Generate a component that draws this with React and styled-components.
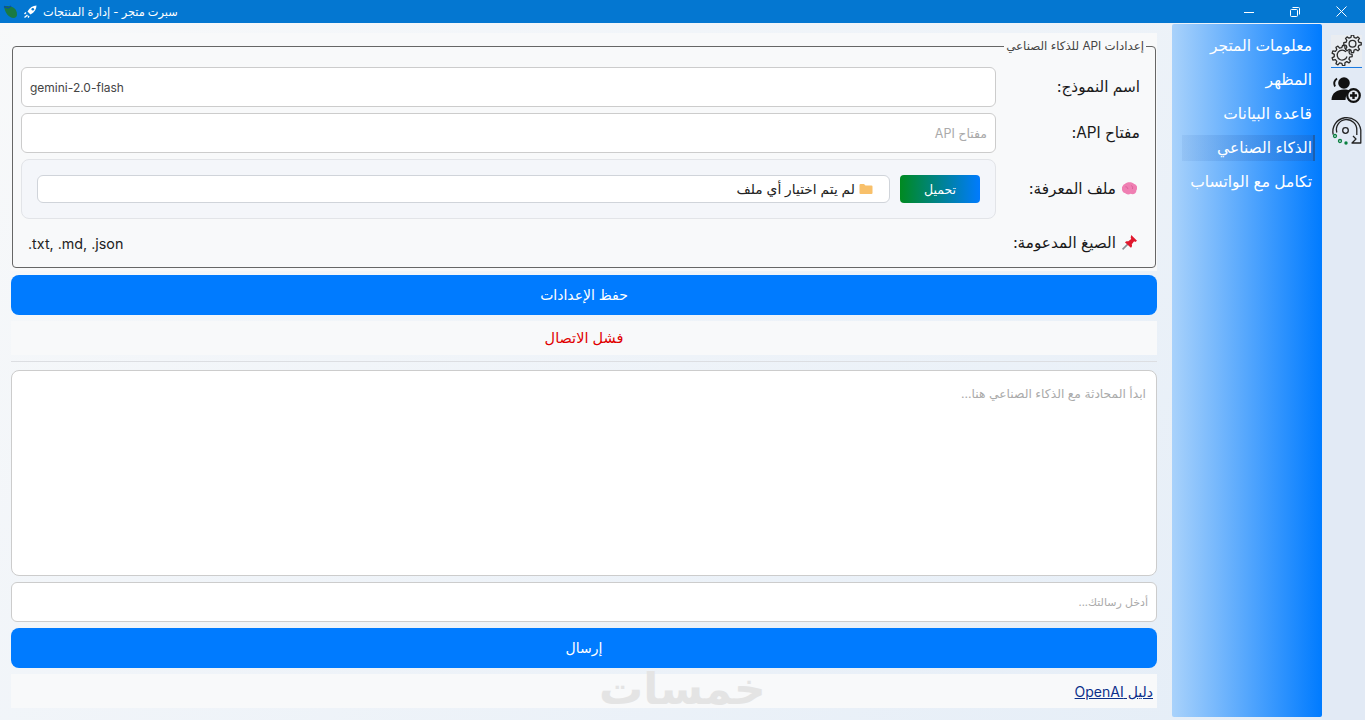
import React from "react";
import styled, { createGlobalStyle } from "styled-components";

const Global = createGlobalStyle`
  html, body, #root { margin: 0; padding: 0; height: 720px; overflow: hidden; }
  * { box-sizing: border-box; }
  body { font-family: "Inter", "DejaVu Sans", sans-serif; color: #1a1a1a; }
`;

const Window = styled.div`
  width: 1365px; height: 720px; display: flex; flex-direction: column;
  background: linear-gradient(135deg, #f8f9fa 0%, #e4edf7 100%);
`;
const TitleBar = styled.div`
  height: 23px; flex: none; background: #0477d1; color: #fff;
  display: flex; align-items: center; justify-content: space-between; padding-right: 1px;
`;
const TitleLeft = styled.div`
  display: flex; align-items: center; gap: 5px; padding-left: 3px; font-size: 11.3px; white-space: nowrap;
`;
const WinControls = styled.div`display: flex; align-items: center; height: 100%;`;
const WinButton = styled.div`
  width: 46px; height: 100%; display: flex; align-items: center; justify-content: center;
`;
const Body = styled.div`flex: 1; display: flex; min-height: 0;`;
const Main = styled.main`
  width: 1172px; flex: none; padding: 10px 15px 0 11px; display: flex; flex-direction: column;
`;
const SettingsPanel = styled.section`
  height: 238px; flex: none; padding: 7px 1px 0; background: #f8f9fa;
`;
const Settings = styled.fieldset`
  margin: 0; padding: 14px 9px 0 8px; height: 228px; border: 1px solid #666; border-radius: 4px;
  background: #f8f9fa; direction: rtl; min-width: 0; display: block;
`;
const Legend = styled.legend`
  padding: 0 2px; font-size: 11.800px; color: #444; line-height: 13px; direction: rtl;
`;
const FormRow = styled.div`
  display: flex; align-items: center; gap: 10px; margin-top: ${p => p.$mt ?? 0}px; padding-right: 6px;
`;
const Label = styled.div`
  width: 134px; flex: none; font-size: 15.300px; color: #1a1a1a; white-space: nowrap; display: flex; align-items: center; gap: 6px;
  padding-bottom: 2px;
`;
const LabelIcon = styled.span`display: flex; margin-right: 3px;`;
const Field = styled.div`
  flex: 1; height: 40px; border: 1px solid #ccc; border-radius: 6px; background: #fff;
  display: flex; align-items: center; padding: 0 8px; font-size: ${p => (p.$ltr ? 12 : 12.5)}px;
  color: ${p => (p.$ph ? "#aaa" : "#444")}; direction: ${p => (p.$ltr ? "ltr" : "rtl")};
`;
const FilePanel = styled.div`
  flex: 1; height: 60px; border: 1px solid #e2e4e8; border-radius: 8px; background: #f4f6fa;
  display: flex; align-items: center; gap: 10px; padding: 0 15px;
`;
const UploadButton = styled.div`
  width: 80px; height: 28px; flex: none; border-radius: 4px; color: #fff; font-size: 12.500px;
  background: linear-gradient(to right, #008a20 0%, #007bff 100%);
  display: flex; align-items: center; justify-content: center;
`;
const FileName = styled.div`
  flex: 1; height: 28px; border: 1px solid #d0d4da; border-radius: 6px; background: #fff;
  display: flex; align-items: center; gap: 4px; padding: 0 16px 0 8px; font-size: 13.800px; color: #222;
`;
const Formats = styled.div`
  flex: 1; direction: ltr; padding-left: 7px; font-size: 14.300px; color: #222;
`;
const PrimaryButton = styled.div`
  height: 40px; flex: none; margin-top: ${p => p.$mt}px; background: #007bff; border-radius: 8px; color: #fff;
  font-size: 14px; display: flex; align-items: center; justify-content: center; padding-bottom: 2px;
`;
const Status = styled.div`
  height: 34px; flex: none; margin-top: 6px; background: #f8f9fa; color: #e00000; font-size: 14.500px;
  display: flex; align-items: center; justify-content: center; padding-bottom: 2px;
`;
const Divider = styled.div`height: 1px; flex: none; margin-top: 6px; background: #dcdee2;`;
const ChatBox = styled.div`
  height: 206px; flex: none; margin-top: 8px; background: #fff; border: 1px solid #ccc; border-radius: 8px;
  padding: 15px 10px; text-align: right; direction: rtl; font-size: 12.300px; color: #aaa;
`;
const MessageInput = styled.div`
  height: 40px; flex: none; margin-top: 6px; background: #fff; border: 1px solid #ccc; border-radius: 6px;
  display: flex; align-items: center; padding: 0 8px; direction: rtl; font-size: 11px; color: #aaa;
`;
const LinkBar = styled.div`
  position: relative; height: 34px; flex: none; margin-top: 6px; background: #f8f9fa;
  display: flex; align-items: center; justify-content: flex-end; padding-right: 4px;
`;
const GuideLink = styled.a`
  font-size: 14px; color: #0b2f8a; text-decoration: underline; direction: rtl;
`;
const Watermark = styled.div`
  position: absolute; left: 588px; top: -10px; font-size: 44px; line-height: 48px; font-weight: 700; color: #e4e4e4;
  direction: rtl; white-space: nowrap;
`;
const Sidebar = styled.nav`
  width: 150px; flex: none; margin: 1px 0 3px; border-radius: 2px; direction: rtl;
  background: linear-gradient(to right, #a9d2fb 0%, #007bff 100%);
  padding: 9px 7px 0 7px; display: flex; flex-direction: column; gap: 8px;
`;
const NavItem = styled.div`
  height: 26px; display: flex; align-items: center; padding: 0 3px 2px 0; color: #fff; font-size: 15.500px; white-space: nowrap;
  ${p => p.$active && `
    background: linear-gradient(to left, rgba(40,90,170,.28), rgba(40,90,170,.08));
    border-right: 2px solid #1c5fae; padding-right: 1px; margin-left: 3px;
  `}
`;
const IconRail = styled.aside`
  flex: 1; background: #e2eaf5; display: flex; flex-direction: column; align-items: flex-start;
  padding: 12px 0 0 9px;
`;
const RailSlot = styled.div`
  width: 31px; height: ${p => p.$h}px; margin-top: ${p => p.$mt ?? 0}px; display: flex; align-items: flex-start;
  border-bottom: ${p => (p.$active ? "1px solid #1a7ae0" : "none")};
`;
const GearSwatch = styled.svg`background: #eaedf1;`;

function gearPath(cx, cy, outer, inner, teeth) {
  const step = (Math.PI * 2) / teeth;
  const pts = [];
  for (let i = 0; i < teeth; i++) {
    const a = i * step;
    [[-0.3, inner], [-0.16, outer], [0.16, outer], [0.3, inner]].forEach(([o, r]) => {
      const t = a + o * step;
      pts.push(`${(cx + r * Math.cos(t)).toFixed(2)} ${(cy + r * Math.sin(t)).toFixed(2)}`);
    });
  }
  return `M${pts.join("L")}Z`;
}

const Gears = () => (
  <GearSwatch width="31" height="31" viewBox="0 0 31 31" fill="none" stroke="#2b2b2b" strokeWidth="1.3" strokeLinejoin="round">
    <path d={gearPath(11, 20.5, 10.2, 7.8, 9)} />
    <path d="M15 16.800A5 5 0 1 0 16 21.500" />
    <path d={gearPath(21.500, 8.800, 8.800, 6.600, 8)} fill="#eaedf1" />
    <circle cx="21.500" cy="8.800" r="3.400" />
  </GearSwatch>
);
const AddUser = () => (
  <svg width="31" height="26" viewBox="0 0 31 26">
    <circle cx="13" cy="6" r="5.800" fill="#111" />
    <path d="M.5 23c0-7 5.500-10.500 12.500-10.500 3 0 5.500 .6 7.500 1.800A9 9 0 0 0 14.500 23z" fill="#111" />
    <path d="M6 1.500a6.500 6.500 0 0 0-2 8" fill="none" stroke="#111" strokeWidth="1.900" />
    <circle cx="22.500" cy="18.500" r="6.300" fill="#dfe5ec" stroke="#111" strokeWidth="2.200" />
    <path d="M22.500 15v7M19 18.500h7" stroke="#111" strokeWidth="2.400" />
  </svg>
);
const Restore = () => (
  <svg width="31" height="31" viewBox="0 0 31 31" fill="none" strokeLinejoin="round">
    <path d="M2.200 19.500A14 14 0 1 1 29.800 15V28H21L25 24 22 21" stroke="#222" strokeWidth="1.300" />
    <path d="M5.800 17.500A10.200 10.200 0 1 1 25.800 15V20" stroke="#222" strokeWidth="1.300" />
    <circle cx="14.500" cy="15.500" r="2.800" stroke="#222" strokeWidth="1.300" />
    <circle cx="4" cy="21" r="1.500" stroke="#0a8040" strokeWidth="1.300" />
    <circle cx="9" cy="26" r="1.500" stroke="#0a8040" strokeWidth="1.300" />
    <circle cx="15" cy="28" r="1.700" fill="#0a8040" />
  </svg>
);
const Leaf = () => (
  <svg width="15" height="14" viewBox="0 0 15 14">
    <path d="M1 1.500c6-1.500 13 1 13 8 0 2-1.500 3.500-3.500 3.500C6 13 2 8 1 1.500z" fill="#1a7a42" />
    <path d="M1 1.500l4 1.500 3-2" stroke="#0b4f9f" strokeWidth="1.400" fill="none" />
  </svg>
);
const Rocket = () => (
  <svg width="15" height="15" viewBox="0 0 15 15" fill="none">
    <path d="M13.500 1.500C10 1.500 6.500 3.500 4.500 7.500l3 3c4-2 6-5.500 6-9z" fill="#fff" />
    <circle cx="9.800" cy="5.200" r="1.300" fill="#0477d1" />
    <path d="M4.500 11l-3 2.500M3 8.500l-1.500 1.500M6 12l-1 1.500" stroke="#fff" strokeWidth="1.400" />
  </svg>
);
const Brain = () => (
  <svg width="15" height="15" viewBox="1 .5 13 12">
    <path d="M3.500 2.500C5 .5 10 .5 11.500 2.500 14 3 15 6 13.500 8c0 3-3 4-5 3-1.500 1-3.500 1-5-.5C1 10 0 6 1.500 4.500c.5-1 1-1.700 2-2z" fill="#ef7fb2" />
    <path d="M4 5c1.500 0 2 1 2 2M9 4c1 .5 1.500 1 1 3" stroke="#d85c98" strokeWidth=".8" fill="none" />
  </svg>
);
const Pin = () => (
  <svg width="15" height="15" viewBox="1 1 13 13">
    <path d="M1.500 13.500l5-5" stroke="#8a8f96" strokeWidth="1.400" />
    <path d="M9 1l5 5-1.500 1-1-.5-2 2.500c.5 1.500 0 2.500-.8 3L3.500 7.300c.7-.8 2-1.200 3-.8l2.500-2-.5-1.200z" fill="#e0182d" />
  </svg>
);
const Folder = () => (
  <svg width="14" height="12" viewBox="0 0 14 12">
    <path d="M.5 2a1 1 0 0 1 1-1h3.500l1.500 1.500h6a1 1 0 0 1 1 1V10a1 1 0 0 1-1 1h-11a1 1 0 0 1-1-1z" fill="#f8c06a" />
  </svg>
);

export default function App() {
  return (
    <Window>
      <Global />
      <TitleBar>
        <TitleLeft>
          <Leaf />
          <Rocket />
          <span dir="rtl">سبرت متجر - إدارة المنتجات</span>
        </TitleLeft>
        <WinControls>
          <WinButton>
            <svg width="10" height="10" viewBox="0 0 10 10"><path d="M0 5.500h10" stroke="#fff" /></svg>
          </WinButton>
          <WinButton>
            <svg width="10" height="10" viewBox="0 0 10 10" fill="none" stroke="#fff"><rect x=".5" y="2.500" width="7" height="7" rx="1" /><path d="M2.500 .5h6a1 1 0 0 1 1 1v6" /></svg>
          </WinButton>
          <WinButton>
            <svg width="11" height="11" viewBox="0 0 11 11"><path d="M.5 .5l10 10M10.500 .5l-10 10" stroke="#fff" /></svg>
          </WinButton>
        </WinControls>
      </TitleBar>
      <Body>
        <Main>
          <SettingsPanel>
            <Settings>
              <Legend>إعدادات API للذكاء الصناعي</Legend>
              <FormRow>
                <Label>اسم النموذج:</Label>
                <Field $ltr>gemini-2.0-flash</Field>
              </FormRow>
              <FormRow $mt={6}>
                <Label>مفتاح API:</Label>
                <Field $ph>مفتاح API</Field>
              </FormRow>
              <FormRow $mt={6}>
                <Label><LabelIcon><Brain /></LabelIcon>ملف المعرفة:</Label>
                <FilePanel>
                  <UploadButton>تحميل</UploadButton>
                  <FileName><Folder />لم يتم اختيار أي ملف</FileName>
                </FilePanel>
              </FormRow>
              <FormRow $mt={14}>
                <Label><LabelIcon><Pin /></LabelIcon>الصيغ المدعومة:</Label>
                <Formats>.txt, .md, .json</Formats>
              </FormRow>
            </Settings>
          </SettingsPanel>
          <PrimaryButton $mt={4}>حفظ الإعدادات</PrimaryButton>
          <Status>فشل الاتصال</Status>
          <Divider />
          <ChatBox>ابدأ المحادثة مع الذكاء الصناعي هنا...</ChatBox>
          <MessageInput>أدخل رسالتك...</MessageInput>
          <PrimaryButton $mt={6}>إرسال</PrimaryButton>
          <LinkBar>
            <Watermark>خمسات</Watermark>
            <GuideLink href="#">دليل OpenAI</GuideLink>
          </LinkBar>
        </Main>
        <Sidebar>
          <NavItem>معلومات المتجر</NavItem>
          <NavItem>المظهر</NavItem>
          <NavItem>قاعدة البيانات</NavItem>
          <NavItem $active>الذكاء الصناعي</NavItem>
          <NavItem>تكامل مع الواتساب</NavItem>
        </Sidebar>
        <IconRail>
          <RailSlot $active $h={33}><Gears /></RailSlot>
          <RailSlot $mt={9} $h={38}><AddUser /></RailSlot>
          <RailSlot $h={31}><Restore /></RailSlot>
        </IconRail>
      </Body>
    </Window>
  );
}
